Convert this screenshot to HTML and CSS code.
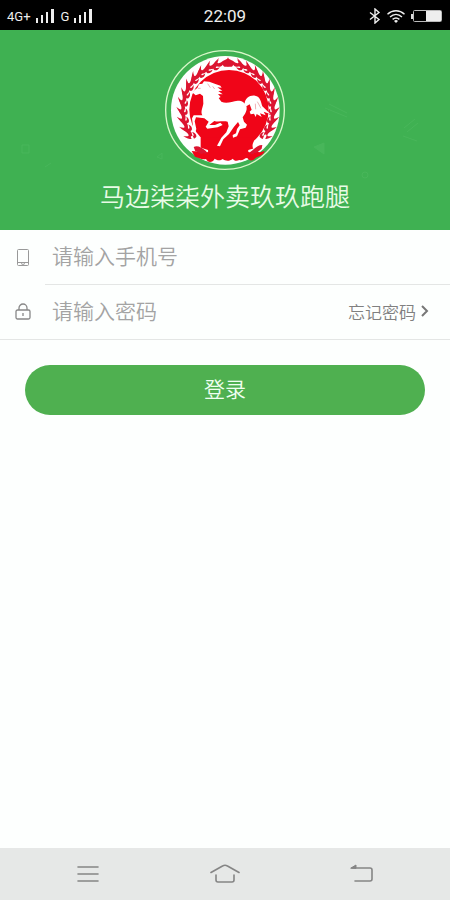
FILE: index.html
```html
<!DOCTYPE html>
<html lang="zh-CN">
<head>
    <meta charset="UTF-8">
    <meta name="viewport" content="width=device-width, initial-scale=1.0">
    <title>登录</title>
    <link rel="stylesheet" href="styles.css">
</head>
<body>

    <!-- 状态栏 -->
    <div class="status-bar">
        <div class="status-left">
            <span>4G+</span>
            <svg class="signal" width="18" height="14" viewBox="0 0 18 14" fill="#eee"><path d="M0 9h2v5H0zM5 6h2v8H5zM10 3h2v11h-2zM15 0h3v14h-3z"/></svg>
            <span class="network">G</span>
            <svg class="signal" width="18" height="14" viewBox="0 0 18 14" fill="#eee"><path d="M0 9h2v5H0zM5 6h2v8H5zM10 3h2v11h-2zM15 0h3v14h-3z"/></svg>
        </div>
        <div class="status-time">22:09</div>
        <div class="status-right">
            <svg width="12" height="16" viewBox="0 0 12 16" fill="none" stroke="#eee" stroke-width="1.4"><path d="M1 4.5l9 7-4 3.5V1l4 3.5-9 7"/></svg>
            <svg width="20" height="14" viewBox="0 0 20 14" fill="none" stroke="#eee" stroke-width="1.4"><path d="M1.5 5.2c5-4.6 12-4.6 17 0M4 8c3.6-3.3 8.4-3.3 12 0M6.6 10.4c2.2-1.8 4.6-1.8 6.8 0"/><path d="M8 12a3 3 0 0 1 4 0l-2 2z" fill="#eee" stroke="none"/></svg>
            <svg width="32" height="14" viewBox="0 0 32 14"><path d="M0 5h2v5H0z" fill="#ddd"/><rect x="2.5" y="1.5" width="28" height="11" rx="1" fill="none" stroke="#bbb"/><path d="M15 2h15v10H15z" fill="#eee"/></svg>
        </div>
    </div>

    <!-- 头部 logo -->
    <header class="header">
        <svg class="header-bg" viewBox="0 0 450 200" preserveAspectRatio="xMidYMid slice" fill="none" stroke="#5fc46f" opacity="0.3">
            <path d="M325 78l22 9M329 74l18 9M404 98l11-9M407 102l11-9M403 106l14 5"/>
            <path d="M314 117l10-4v11z" fill="#5fc46f"/>
            <circle cx="365" cy="145" r="3"/>
            <path d="M22 115h7v8h-7zM45 137l6-4M157 127l5-4v6z"/>
        </svg>
        <svg class="logo" viewBox="15 15 360 360">
            <defs>
                <path id="flame" d="M-126 17C-137 22-149 14-158-6C-149 2-144 4-143 0C-141-8-149-15-149-30C-141-16-133-14-132-5C-131 3-137 8-133 10C-129 11-129 4-130-2C-123 4-122 12-126 17Z"/>
                <g id="flames">
                    <use href="#flame" transform="rotate(-32)"/>
                    <use href="#flame" transform="rotate(-21)"/>
                    <use href="#flame" transform="rotate(-10)"/>
                    <use href="#flame" transform="rotate(1)"/>
                    <use href="#flame" transform="rotate(12)"/>
                    <use href="#flame" transform="rotate(23)"/>
                    <use href="#flame" transform="rotate(34)"/>
                    <use href="#flame" transform="rotate(45)"/>
                    <use href="#flame" transform="rotate(56)"/>
                    <use href="#flame" transform="rotate(67)"/>
                    <use href="#flame" transform="rotate(77)"/>
                </g>
            </defs>
            <circle cx="195" cy="195" r="178" fill="none" stroke="#d9f7c9" stroke-width="4"/>
            <circle cx="196" cy="196" r="163" fill="#fff"/>
            <g fill="#f00518">
                <circle cx="207" cy="194" r="119"/>
                <g fill="#dc1430">
                    <use href="#flames" transform="translate(207 194)"/>
                    <use href="#flames" transform="translate(201 194) scale(-1 1)"/>
                    <path d="M204 37C201 49 182 47 189 61C193 69 200 63 204 66C208 63 216 69 219 61C225 47 207 49 204 37Z"/>
                </g>
                <path d="M122 278L288 278C270 302 276 318 300 322L314 318C310 334 292 333 286 340C276 351 266 346 262 339C254 338 248 349 238 345C228 350 222 346 218 341C208 350 196 348 188 342C180 349 168 345 164 341C158 353 144 355 138 342C124 345 116 337 105 335L95 318L122 320Z"/>
            </g>
            <path d="M96 276C104 302 119 314 141 318M316 272C308 299 291 313 268 318" fill="none" stroke="#fff" stroke-width="7" stroke-linecap="round"/>
            <path d="M101 306C111 300 124 306 135 316C146 324 137 330 130 324C122 332 116 320 106 319ZM307 300C292 300 287 309 275 318C264 326 276 332 284 323C291 327 298 315 305 311Z" fill="#dc1430"/>
            <!-- 马 -->
            <g fill="#fff">
                <path d="M98 143L103 136L112 129L117 118L127 116L132 109L148 110L160 115L181 122L185 128L172 127L187 137L175 138L188 148L174 147L182 156L176 159L184 170C199 177 215 170 233 167C247 167 255 173 259 183C263 196 255 207 248 217L252 230L261 239L257 248L240 253L231 274L219 278L218 270L228 265L231 252L239 241L234 231L222 245L207 267L190 283L180 304L171 302L184 278L199 262L206 244L203 230C188 227 174 232 163 228L148 240L165 240L181 233L188 240L173 247L142 251L137 245L146 230L133 220L108 217L104 229L109 252L106 260L100 254L96 220L101 211L127 211C121 199 128 189 130 176L129 153L120 146L107 151Z"/>
                <path d="M254 179C253 160 269 150 285 152C301 154 303 171 307 184L332 208L311 200L317 211L300 205L305 216L290 207L287 216L282 206L272 208L269 200L275 194L269 178L259 184Z"/>
            </g>
            <path d="M114 130L122 130M143 116L151 128M158 124L164 132M286 176L287 193M292 170L303 190" stroke="#e98b91" stroke-width="2" fill="none"/>
        </svg>
        <h1 class="title">马边柒柒外卖玖玖跑腿</h1>
    </header>

    <!-- 登录表单 -->
    <form class="login-form">
        <div class="form-row">
            <label class="icon" for="phone" aria-label="手机号">
                <svg width="16" height="20" viewBox="0 0 16 20" fill="none" stroke="#999"><rect x="2.5" y="1.5" width="11" height="16" rx="1"/><path d="M3 14.5h10M6 15.5l2 1 2-1"/></svg>
            </label>
            <div class="field line">
                <input type="tel" id="phone" placeholder="请输入手机号">
            </div>
        </div>
        <div class="form-row last">
            <label class="icon" for="password" aria-label="密码">
                <svg width="16" height="18" viewBox="0 0 16 18" fill="none" stroke="#888" stroke-width="1.3"><rect x="1" y="7" width="14" height="9" rx="1.5"/><path d="M4 7V5a4 4 0 0 1 8 0v2M8 10v3"/></svg>
            </label>
            <div class="field">
                <input type="password" id="password" placeholder="请输入密码">
                <a class="forget" href="#">忘记密码
                    <svg width="8" height="12" viewBox="0 0 8 12" fill="none" stroke="#777" stroke-width="2"><path d="M1 1l5 5-5 5"/></svg>
                </a>
            </div>
        </div>
        <button class="login-btn" type="submit">登录</button>
    </form>

    <!-- 底部导航键 -->
    <nav class="nav-bar">
        <button type="button" aria-label="菜单">
            <svg width="30" height="20" viewBox="0 0 30 20" fill="none" stroke="#858585" stroke-width="1.6" stroke-linecap="round"><path d="M5 3h20M5 10h20M5 17h20"/></svg>
        </button>
        <button type="button" aria-label="主页">
            <svg width="30" height="20" viewBox="0 0 30 20" fill="none" stroke="#858585" stroke-width="1.6" stroke-linecap="round"><path d="M1 8.5L12.5 2Q15 .5 17.5 2L29 8.5M6 11v5q0 2 2 2h14q2 0 2-2v-5"/></svg>
        </button>
        <button type="button" aria-label="返回">
            <svg width="30" height="20" viewBox="0 0 30 20" fill="none" stroke="#858585" stroke-width="1.6" stroke-linecap="round"><path d="M5 4h18q2 0 2 2v9q0 2-2 2H8"/><path d="M4 4l5-3v3z" fill="#858585" stroke-width="1"/></svg>
        </button>
    </nav>

</body>
</html>
```
FILE: styles.css
```css
* {
    box-sizing: border-box;
}

body {
    margin: 0;
    min-height: 100vh;
    display: flex;
    flex-direction: column;
    background-color: #fdfffe;
    font-family: Roboto, "Noto Sans CJK SC", sans-serif;
    font-weight: 350;
}

svg {
    display: block;
}

/* 状态栏 */
.status-bar {
    height: 30px;
    padding: 0 7px;
    display: grid;
    grid-template-columns: 1fr auto 1fr;
    align-items: center;
    background-color: #000;
    color: #eee;
    font-size: 13px;
    font-weight: 400;
}

.status-left,
.status-right {
    display: flex;
    align-items: center;
    gap: 5px;
}

.network {
    margin-left: 2px;
}

.status-right {
    justify-content: flex-end;
}

.status-time {
    font-size: 17px;
    line-height: 32px;
}

/* 头部 */
.header {
    position: relative;
    height: 200px;
    padding-top: 20px;
    display: flex;
    flex-direction: column;
    align-items: center;
    background-color: #3fb152;
}

.header-bg {
    position: absolute;
    top: 0;
    left: 0;
    width: 100%;
    height: 100%;
}

.logo {
    position: relative;
    width: 120px;
    height: 120px;
}

.title {
    position: relative;
    margin: 10px 0 0;
    font-size: 25px;
    line-height: 36px;
    font-weight: 350;
    color: #e8fbe6;
}

/* 表单 */
.login-form {
    flex: 1;
}

.form-row {
    display: flex;
    height: 55px;
}

.form-row.last {
    border-bottom: 1px solid #e4e6e5;
}

.icon {
    width: 45px;
    display: flex;
    align-items: center;
    justify-content: center;
}

.field {
    flex: 1;
    display: flex;
    align-items: center;
    padding: 0 21px 0 7px;
}

.field.line {
    border-bottom: 1px solid #e4e6e5;
}

.field input {
    flex: 1;
    min-width: 0;
    height: 100%;
    padding: 0;
    border: none;
    outline: none;
    background: none;
    font: inherit;
    font-size: 21px;
    color: #333;
}

.field input::placeholder {
    color: #a3a3a3;
}

.forget {
    display: flex;
    align-items: center;
    gap: 5px;
    padding-bottom: 2px;
    font-size: 17px;
    color: #808080;
    text-decoration: none;
}

.login-btn {
    display: block;
    width: calc(100% - 50px);
    height: 50px;
    margin: 25px auto;
    padding: 0 0 4px;
    border: none;
    border-radius: 25px;
    background-color: #4fb050;
    color: #f0fff0;
    font: inherit;
    font-size: 21px;
    cursor: pointer;
}

/* 底部导航键 */
.nav-bar {
    height: 52px;
    padding: 0 19px;
    display: flex;
    justify-content: space-around;
    align-items: center;
    background-color: #e6e8e7;
}

.nav-bar button {
    padding: 0;
    border: none;
    background: none;
    cursor: pointer;
}
```
